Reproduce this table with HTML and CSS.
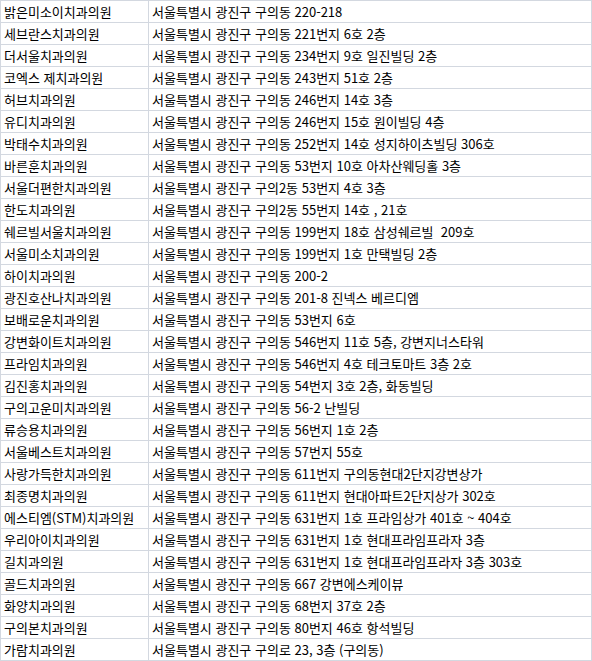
FILE: index.html
```html
<!DOCTYPE html>
<html lang="ko">
<head>
<meta charset="utf-8">
<link rel="stylesheet" href="styles.css">
</head>
<body>
<table class="list">
<colgroup><col class="c-name"><col class="c-addr"></colgroup>
<tbody>
<tr><td>밝은미소이치과의원</td><td>서울특별시 광진구 구의동 220-218</td></tr>
<tr><td>세브란스치과의원</td><td>서울특별시 광진구 구의동 221번지 6호 2층</td></tr>
<tr><td>더서울치과의원</td><td>서울특별시 광진구 구의동 234번지 9호 일진빌딩 2층</td></tr>
<tr><td>코엑스 제치과의원</td><td>서울특별시 광진구 구의동 243번지 51호 2층</td></tr>
<tr><td>허브치과의원</td><td>서울특별시 광진구 구의동 246번지 14호 3층</td></tr>
<tr><td>유디치과의원</td><td>서울특별시 광진구 구의동 246번지 15호 원이빌딩 4층</td></tr>
<tr><td>박태수치과의원</td><td>서울특별시 광진구 구의동 252번지 14호 성지하이츠빌딩 306호</td></tr>
<tr><td>바른훈치과의원</td><td>서울특별시 광진구 구의동 53번지 10호 아차산웨딩홀 3층</td></tr>
<tr><td>서울더편한치과의원</td><td>서울특별시 광진구 구의2동 53번지 4호 3층</td></tr>
<tr><td>한도치과의원</td><td>서울특별시 광진구 구의2동 55번지 14호 , 21호</td></tr>
<tr><td>쉐르빌서울치과의원</td><td>서울특별시 광진구 구의동 199번지 18호 삼성쉐르빌&nbsp; 209호</td></tr>
<tr><td>서울미소치과의원</td><td>서울특별시 광진구 구의동 199번지 1호 만택빌딩 2층</td></tr>
<tr><td>하이치과의원</td><td>서울특별시 광진구 구의동 200-2</td></tr>
<tr><td>광진호산나치과의원</td><td>서울특별시 광진구 구의동 201-8 진넥스 베르디엠</td></tr>
<tr><td>보배로운치과의원</td><td>서울특별시 광진구 구의동 53번지 6호</td></tr>
<tr><td>강변화이트치과의원</td><td>서울특별시 광진구 구의동 546번지 11호 5층, 강변지너스타워</td></tr>
<tr><td>프라임치과의원</td><td>서울특별시 광진구 구의동 546번지 4호 테크토마트 3층 2호</td></tr>
<tr><td>김진홍치과의원</td><td>서울특별시 광진구 구의동 54번지 3호 2층, 화동빌딩</td></tr>
<tr><td>구의고운미치과의원</td><td>서울특별시 광진구 구의동 56-2 난빌딩</td></tr>
<tr><td>류승용치과의원</td><td>서울특별시 광진구 구의동 56번지 1호 2층</td></tr>
<tr><td>서울베스트치과의원</td><td>서울특별시 광진구 구의동 57번지 55호</td></tr>
<tr><td>사랑가득한치과의원</td><td>서울특별시 광진구 구의동 611번지 구의동현대2단지강변상가</td></tr>
<tr><td>최종명치과의원</td><td>서울특별시 광진구 구의동 611번지 현대아파트2단지상가 302호</td></tr>
<tr><td>에스티엠(STM)치과의원</td><td>서울특별시 광진구 구의동 631번지 1호 프라임상가 401호 ~ 404호</td></tr>
<tr><td>우리아이치과의원</td><td>서울특별시 광진구 구의동 631번지 1호 현대프라임프라자 3층</td></tr>
<tr><td>길치과의원</td><td>서울특별시 광진구 구의동 631번지 1호 현대프라임프라자 3층 303호</td></tr>
<tr><td>골드치과의원</td><td>서울특별시 광진구 구의동 667 강변에스케이뷰</td></tr>
<tr><td>화양치과의원</td><td>서울특별시 광진구 구의동 68번지 37호 2층</td></tr>
<tr><td>구의본치과의원</td><td>서울특별시 광진구 구의동 80번지 46호 항석빌딩</td></tr>
<tr><td>가람치과의원</td><td>서울특별시 광진구 구의로 23, 3층 (구의동)</td></tr>
</tbody>
</table>
</body>
</html>
```
FILE: styles.css
```css
html, body {
  margin: 0;
  padding: 0;
  background: #ffffff;
}
.list {
  border-collapse: collapse;
  table-layout: fixed;
  width: 592px;
  font-family: "Noto Sans CJK KR", "Noto Sans", sans-serif;
  font-size: 13px;
  color: #000000;
}
.c-name { width: 148px; }
.list td {
  border: 1px solid #d3d8e0;
  height: 21px;
  padding: 0 0 0 3px;
  line-height: 21px;
  white-space: nowrap;
  overflow: hidden;
  box-sizing: border-box;
  vertical-align: middle;
}
```
